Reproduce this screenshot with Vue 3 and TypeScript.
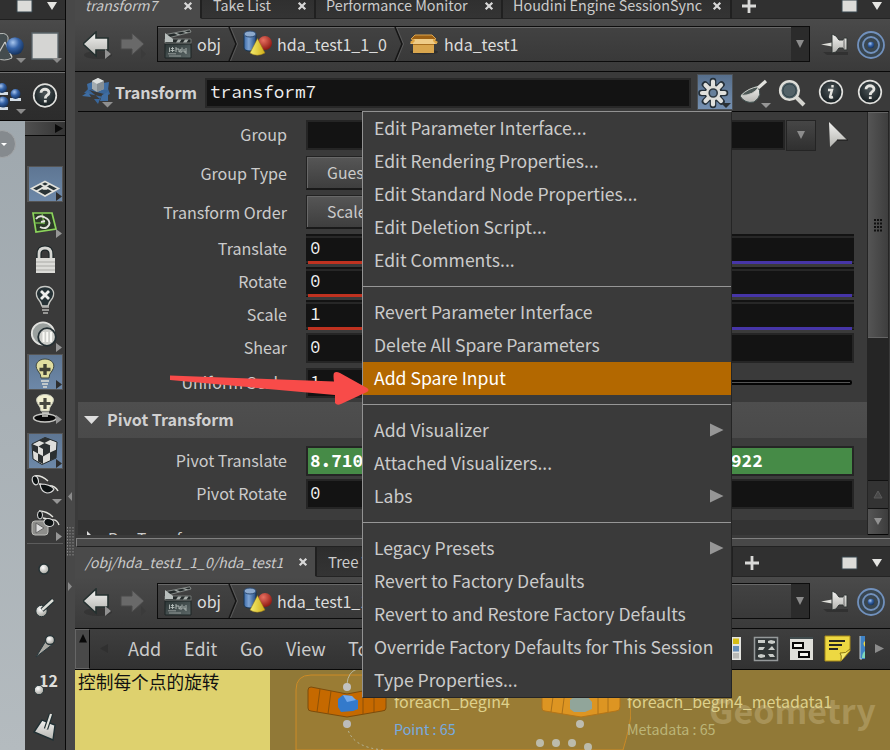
<script setup lang="ts">
interface MenuItem {
  label: string
  sub?: boolean
  active?: boolean
}

interface ParamRow {
  label: string
  value: string
  expr?: boolean
  end?: string
  axis?: boolean
}

const menuGroups: MenuItem[][] = [
  [
    { label: 'Edit Parameter Interface...' },
    { label: 'Edit Rendering Properties...' },
    { label: 'Edit Standard Node Properties...' },
    { label: 'Edit Deletion Script...' },
    { label: 'Edit Comments...' },
  ],
  [
    { label: 'Revert Parameter Interface' },
    { label: 'Delete All Spare Parameters' },
    { label: 'Add Spare Input', active: true },
  ],
  [
    { label: 'Add Visualizer', sub: true },
    { label: 'Attached Visualizers...' },
    { label: 'Labs', sub: true },
  ],
  [
    { label: 'Legacy Presets', sub: true },
    { label: 'Revert to Factory Defaults' },
    { label: 'Revert to and Restore Factory Defaults' },
    { label: 'Override Factory Defaults for This Session' },
    { label: 'Type Properties...' },
  ],
]

const vectorRows: ParamRow[] = [
  { label: 'Translate', value: '0', axis: true },
  { label: 'Rotate', value: '0', axis: true },
  { label: 'Scale', value: '1', axis: true },
  { label: 'Shear', value: '0' },
]

const pivotRows: ParamRow[] = [
  { label: 'Pivot Translate', value: '8.710', expr: true, end: '922' },
  { label: 'Pivot Rotate', value: '0' },
]

const networkMenus: string[] = ['Add', 'Edit', 'Go', 'View', 'Tools']
</script>

<template>
  <div class="app">
    <svg class="defs" width="0" height="0">
      <defs>
        <linearGradient id="silver" x1="0" y1="0" x2="0" y2="1">
          <stop offset="0" stop-color="#f2f2f0" /><stop offset="1" stop-color="#b4b4b0" />
        </linearGradient>
        <linearGradient id="slate" x1="0" y1="0" x2="1" y2="1">
          <stop offset="0" stop-color="#2c3636" /><stop offset="1" stop-color="#5d6868" />
        </linearGradient>
        <linearGradient id="blue" x1="0" y1="0" x2="1" y2="0">
          <stop offset="0" stop-color="#3c6aa8" /><stop offset=".4" stop-color="#7fa5d4" /><stop offset="1" stop-color="#234a80" />
        </linearGradient>
        <linearGradient id="yellow" x1="0" y1="0" x2="1" y2="0">
          <stop offset="0" stop-color="#f4ee70" /><stop offset="1" stop-color="#d0ae18" />
        </linearGradient>
        <radialGradient id="red" cx=".38" cy=".3" r=".7">
          <stop offset="0" stop-color="#e87060" /><stop offset="1" stop-color="#8f1a14" />
        </radialGradient>
        <radialGradient id="ball" cx=".38" cy=".3" r=".7">
          <stop offset="0" stop-color="#a8c6ee" /><stop offset=".5" stop-color="#3563a8" /><stop offset="1" stop-color="#163460" />
        </radialGradient>
        <radialGradient id="pearl" cx=".4" cy=".35" r=".7">
          <stop offset="0" stop-color="#fff" /><stop offset="1" stop-color="#9d9d96" />
        </radialGradient>
        <radialGradient id="glass" cx=".5" cy=".4" r=".6">
          <stop offset="0" stop-color="#4c5558" /><stop offset="1" stop-color="#151d20" />
        </radialGradient>
      </defs>
      <symbol id="nav" viewBox="0 0 66 34">
        <ellipse cx="15" cy="24" rx="14" ry="4" fill="#222" opacity=".35" />
        <path d="M0 13 13 1V7H25V19H13V25Z" fill="url(#silver)" stroke="#24302f" stroke-width="1.6" />
        <path d="M61 13 49 2V8H38V18H49V24Z" fill="#696969" stroke="#4b4b4b" />
        <path d="M22 18 28 23 22 28Z" fill="#929292" />
        <path d="M58 18 63 23 58 28Z" fill="#3b3b3b" />
      </symbol>
      <symbol id="clapper" viewBox="0 0 28 30">
        <path d="M1 15H27V29H1Z" fill="url(#slate)" stroke="#1c2525" />
        <path d="M1 10H27V14H1Z" fill="#242a2a" stroke="#8a908d" stroke-width=".7" />
        <path d="M2 5.500 26 .8 27 3 4 9Z" fill="#242a2a" stroke="#a5aaa7" stroke-width=".7" />
        <path d="M1 4 5 7 9 10 9 13H1Z" fill="#b9bfbd" />
        <path d="M10 4.500l4 1.500 2.500-.6-4-1.500ZM18 2.800l4 1.200 2.500-.6-4-1.200ZM14 10.500h3.500l-2 3h-3.500ZM21 10.500h3.500l-2 3h-3.500Z" fill="#aab0ad" />
        <path d="M5.500 18.500v4.500M7 19.500h3M8.500 18v5M6.500 21.500h4M12 18v5M12 20h3v3M17 20l-1.500 3h2.500v-4.500M20 20v3h2M22 19v6" fill="none" stroke="#b6bdba" stroke-width=".9" />
        <path d="M4 24.800H12M5 27H17" fill="none" stroke="#a4aba8" stroke-width=".8" />
      </symbol>
      <symbol id="shapes" viewBox="0 0 30 28">
        <path d="M1 4V18C1 22 13 22 13 18V4Z" fill="url(#blue)" stroke="#183450" />
        <ellipse cx="7" cy="4" rx="6" ry="3" fill="#8ca9cd" stroke="#2d4a70" />
        <circle cx="22" cy="13" r="7" fill="url(#red)" />
        <path d="M14.5 8.500 7 23Q14 27.500 22 23Z" fill="url(#yellow)" stroke="#927319" stroke-width=".5" />
      </symbol>
      <symbol id="crate" viewBox="0 0 30 21">
        <ellipse cx="15" cy="18" rx="14" ry="2.5" fill="#252525" opacity=".6" />
        <path d="M4 8H25V19H4Z" fill="#d9a64e" /><path d="M4 8H25V11H4Z" fill="#a86f20" />
        <path d="M6 1H23L27 5 24 6H6L2 5Z" fill="#9b6014" stroke="#dda44b" />
        <path d="M5 5H25L28 10H1Z" fill="#efcc88" /><path d="M5 5 1 8 3 10 6 7M24 5 29 8 27 10 24 7" fill="#e0a644" />
      </symbol>
      <symbol id="pin" viewBox="0 0 28 24">
        <path d="M2 19H27V22H6Z" fill="#282828" opacity=".6" />
        <path d="M0 11.500 11 9.500V13.500Z" fill="#deded9" />
        <path d="M11 1 15 3 18 7H22L23 5H26V17H23L22 15H18L15 19 11 20Z" fill="url(#silver)" stroke="#303635" />
        <path d="M23 6V16" stroke="#666" />
      </symbol>
      <symbol id="target" viewBox="0 0 30 30">
        <g fill="none" stroke="#7191bd"><circle cx="15" cy="15" r="13" stroke-width="1.8" fill="#394650" /><circle cx="15" cy="15" r="8" stroke-width="1.8" /></g>
        <circle cx="15" cy="15" r="3.3" fill="url(#ball)" />
      </symbol>
      <symbol id="winctl" viewBox="0 0 42 16">
        <path d="M1 2H16V14H1Z" fill="#dcdcd9" stroke="#36454c" /><path d="M31 4H41L36 12Z" fill="#e5e5e2" />
      </symbol>
      <symbol id="x" viewBox="0 0 10 10"><path d="M1.7 1.7 8.3 8.3M8.3 1.7 1.7 8.3" stroke="#d8d8d8" stroke-width="2.2" /></symbol>
      <symbol id="plus" viewBox="0 0 16 16"><path d="M8 1V15M1 8H15" stroke="#d9d9d7" stroke-width="2.8" /></symbol>
      <symbol id="help" viewBox="0 0 26 26">
        <circle cx="13" cy="13" r="11.3" fill="url(#glass)" stroke="#e0e0dd" stroke-width="1.7" />
        <path d="M9 10.2C9 5.5 17 5.8 17 10C17 13 13.3 12.5 13.3 16M13.3 17.6V20" fill="none" stroke="#e4e4e0" stroke-width="2.8" />
      </symbol>
    </svg>

    <aside class="left">
      <div class="left-tabs"><svg width="42" height="16"><use href="#winctl" /></svg></div>
      <div class="left-path">
        <svg width="65" height="51">
          <path d="M-5 15Q6 11 8 17V28L12 38Q4 42-3 38" fill="#444c4e" stroke="#b9bcb9" />
          <path d="M5 22 12 37M5 22-3 36" stroke="#c8c8c4" stroke-width="1.2" />
          <circle cx="15" cy="26" r="8.7" fill="url(#ball)" />
          <path d="M16 38H26L21 43Z" fill="#8b8b8b" />
          <path d="M32 13H58V39H32Z" fill="#d5d5d3" stroke="#59646a" stroke-width="1.3" /><path d="M52 38H62L57 43Z" fill="#8b8b8b" />
        </svg>
      </div>
      <div class="left-tools">
        <svg width="65" height="47">
          <g fill="#d4dde5"><path d="M-2 18H8V21H-2ZM10 24H21V27H10ZM-2 33H8V36H-2Z" /></g>
          <circle cx="2" cy="14" r="5" fill="url(#ball)" /><circle cx="15.500" cy="20" r="5" fill="url(#ball)" /><circle cx="3" cy="28" r="5.500" fill="url(#ball)" />
          <path d="M16 35H26L21 40Z" fill="#8b8b8b" /><use href="#help" x="32" y="8.500" width="26" height="26" />
        </svg>
      </div>
      <div class="left-body">
        <div class="viewport"><span class="knob"></span></div>
        <div class="tools">
          <div class="tool-top"><svg width="8" height="10"><path d="M0 0 8 4.500 0 9Z" fill="#0a0a0a" /></svg></div>
          <div></div>
          <svg class="on" viewBox="0 0 40 36"><path d="M20 15.500 33.500 22.500 20 30 6.500 22.500Z" fill="#2a3437" stroke="#e2e2dc" stroke-width="1.600" /><path d="M15.500 18 29 25.500M24.500 18 11 25.500" stroke="#e4e4df" stroke-width="1.700" /><ellipse cx="20" cy="22" rx="3.500" ry="1.800" fill="#e4e4df" /><path d="M31 26 37 30.500 31 35Z" fill="#2d2d2d" /></svg>
          <svg viewBox="0 0 40 38"><path d="M8 11H27L31 27 11 30Z" fill="#2b3a27" stroke="#8bd45b" stroke-width="1.700" /><path d="M10 21H20M17 11 19 22" stroke="#6eac4a" stroke-width="1.400" /><path d="M11 17Q14 13 19 15 26 18 24 23 21 28 15 25M16 20l4-1" fill="none" stroke="#e4e4df" stroke-width="1.900" /><path d="M31 27 37 31.500 31 36Z" fill="#969696" /></svg>
          <svg viewBox="0 0 40 39"><path d="M14 19V14Q14 8 20 8T26 14V19" fill="none" stroke="#192426" stroke-width="5" /><path d="M14 19V14Q14 8 20 8T26 14V19" fill="none" stroke="#d6d6d2" stroke-width="2.800" /><path d="M11 18H30V33H11Z" fill="#dcdcd8" /><path d="M11 22H30M11 26H30M11 30H30" stroke="#aaaaa5" stroke-width="1.200" /></svg>
          <svg viewBox="0 0 40 38"><path d="M17 27Q16 23 12.500 19C9 12 14 7.500 20 7.500S31 12 27.500 19Q24 23 23 27Z" fill="#263236" stroke="#c8c9c5" stroke-width="1.300" /><path d="M16 12 24 20M24 12 16 20" stroke="#eee" stroke-width="2.800" /><path d="M17 28H24M17 31H24M18 34H23" stroke="#b7b7b4" stroke-width="1.500" /></svg>
          <svg viewBox="0 0 40 37"><circle cx="18" cy="16.500" r="11.200" fill="#9aa09e" stroke="#e1e1de" stroke-width="1.800" /><circle cx="22" cy="20" r="8.800" fill="#cecfcb" stroke="#253034" stroke-width="1.800" /><path d="M18.500 15V25M22.200 15V25M26 15V25" stroke="#f9f9f5" stroke-width="2" /><path d="M31 26 37 30.500 31 35Z" fill="#969696" /></svg>
          <svg class="on" viewBox="0 0 40 36"><path d="M16 24Q16 20 13 17C8 10 14 5 20 5S32 10 27 17Q24 20 24 24Z" fill="#e0dda0" stroke="#3c4541" /><path d="M20 10V21M14.500 15.500H25.500" stroke="#3f3f35" stroke-width="3.400" /><path d="M16 27H24M17 30H23M18 33H22" stroke="#deded8" stroke-width="1.700" /><path d="M31 26 37 30.500 31 35Z" fill="#2d2d2d" /></svg>
          <svg viewBox="0 0 40 43"><ellipse cx="20" cy="28" rx="11.500" ry="4" fill="#0a0a0a" stroke="#c9c9c5" stroke-width="1.400" /><path d="M16 21Q16 18 13 14C9 8 14 4.500 20 4.500S31 8 27 14Q24 18 24 21Z" fill="#f1efd0" stroke="#c7c9b9" /><path d="M20 8V19M14.500 13.500H25.500" stroke="#484840" stroke-width="3.200" /><path d="M17 23H24M17 26H23" stroke="#d5d5ce" stroke-width="1.600" /><path d="M31 25 37 29.500 31 34Z" fill="#969696" /></svg>
          <svg class="on" viewBox="0 0 40 36"><path d="M20 4.500 32 9 31 25 17 31.500 8 26 7 11Z" fill="#dededb" stroke="#202729" /><path d="M13.500 7.500 20 4.500 26 6.500 19.500 10ZM13.500 13.500 19.500 10 25.500 12.500 18 16ZM7 11 13 13.500V20.500L7.500 17.500ZM13 20.500 18 23V31L13 28.500ZM18 16 25 12.500V19.500L18 23.500ZM25 19.500 31.500 16.500 31 25 25 27.500Z" fill="#2b3032" /><path d="M31 26 37 30.500 31 35Z" fill="#2d2d2d" /></svg>
          <svg viewBox="0 0 40 38"><path d="M10 7Q16 6 23 12M14 15 22 17Q30 16 33 22" fill="none" stroke="#e5e5df" stroke-width="1.500" /><ellipse cx="10.500" cy="11.500" rx="3" ry="4.500" fill="#0d1213" stroke="#ddd" stroke-width="1.200" transform="rotate(-15 10 12)" /><path d="M15 15Q25 15 29 20 27 24 22 24 16 23 15 15Z" fill="#0d1213" stroke="#ddd" stroke-width="1.200" /><path d="M27 30H37L32 35Z" fill="#969696" /></svg>
          <svg viewBox="0 0 40 36"><path d="M10 14H20Q23 14 23 17V25Q23 28 20 28H10Q7 28 7 25V17Q7 14 10 14Z" fill="#8e8e8b" stroke="#bdbdb9" /><path d="M11 16 19 21 11 26Z" fill="#ddd" stroke="#666" /><path d="M14 4Q22 4 28 10M18 11 27 13Q32 12 34 18" fill="none" stroke="#e5e5df" stroke-width="1.400" /><ellipse cx="15" cy="8" rx="2.500" ry="4" fill="#0d1213" stroke="#ddd" /><ellipse cx="24" cy="15.500" rx="5" ry="3.800" fill="#0d1213" stroke="#ddd" transform="rotate(15 24 15)" /><path d="M31 25 37 29.500 31 34Z" fill="#969696" /></svg>
          <div class="tool-rule"></div>
          <svg viewBox="0 0 40 50"><circle cx="19" cy="25" r="5" fill="url(#pearl)" stroke="#263336" stroke-width="1.500" /></svg>
          <svg viewBox="0 0 40 39"><circle cx="16.500" cy="17" r="5.700" fill="url(#pearl)" stroke="#263336" /><path d="M17 16 28 6" stroke="#213033" stroke-width="4.500" /><path d="M17 16 28 6" stroke="#dedfd9" stroke-width="2.400" /></svg>
          <svg viewBox="0 0 40 39"><path d="M22 6 28 11 11 24Z" fill="#aaa9a3" stroke="#28383d" /><circle cx="25" cy="7" r="4.500" fill="url(#pearl)" stroke="#263336" stroke-width="1.300" /></svg>
          <svg viewBox="0 0 40 39"><text x="14" y="15" class="twelve">12</text><circle cx="14" cy="18" r="4.700" fill="url(#pearl)" stroke="#263336" /></svg>
          <svg viewBox="0 0 40 39"><path d="M9 21 17 9 30 14 28 29Z" fill="url(#silver)" stroke="#203034" stroke-width="1.400" /><path d="M21 18 26 3" stroke="#203034" stroke-width="4.500" /><path d="M21 18 26 3" stroke="#e2e2dd" stroke-width="2.200" /></svg>
        </div>
      </div>
    </aside>

    <div class="divider">
      <svg width="9" height="750"><path d="M6 492V501L2 496.500ZM2 582 6 586.500 2 591Z" fill="#8b8b8b" /><path d="M4 527V556M7 527V556M1.500 527V556" stroke="#8a8a8a" stroke-dasharray="1.500 1.500" /></svg>
    </div>

    <main class="right">
      <section class="params-pane">
        <nav class="tabs top-tabs">
          <div class="tab current t-transform"><i>transform7</i><svg width="10" height="10"><use href="#x" /></svg></div>
          <div class="tab t-take"><span>Take List</span><svg width="10" height="10"><use href="#x" /></svg></div>
          <div class="tab t-perf"><span>Performance Monitor</span><svg width="10" height="10"><use href="#x" /></svg></div>
          <div class="tab t-engine"><span>Houdini Engine SessionSync</span><svg width="10" height="10"><use href="#x" /></svg></div>
          <div class="tab-end"><svg width="16" height="16"><use href="#plus" /></svg><svg width="42" height="16"><use href="#winctl" /></svg></div>
        </nav>
        <div class="pathbar">
          <svg class="nav" width="66" height="34"><use href="#nav" /></svg>
          <div class="crumbs">
            <svg width="28" height="30"><use href="#clapper" /></svg><span class="c-obj">obj</span>
            <svg class="chev" width="10" height="34"><path d="M1 0 8 17 1 34" fill="none" stroke="#151515" stroke-width="1.500" /><path d="M2.500 0 9.500 17 2.500 34" fill="none" stroke="#666" stroke-width=".7" /></svg>
            <svg width="30" height="28"><use href="#shapes" /></svg><span class="c-hda">hda_test1_1_0</span>
            <svg class="chev" width="10" height="34"><path d="M1 0 8 17 1 34" fill="none" stroke="#151515" stroke-width="1.500" /><path d="M2.500 0 9.500 17 2.500 34" fill="none" stroke="#666" stroke-width=".7" /></svg>
            <svg width="30" height="21"><use href="#crate" /></svg><span class="c-last">hda_test1</span>
            <div class="drop"><svg width="10" height="8"><path d="M1 0H9L5 8Z" fill="#8c8c8c" /></svg></div>
          </div>
          <svg class="pin" width="28" height="24"><use href="#pin" /></svg>
          <svg width="30" height="30"><use href="#target" /></svg>
        </div>
        <header class="node-head">
          <svg width="32" height="32">
            <path d="M2 17 8 11 10 14 23 14 25 10 28 18 22 21ZM7 14 18 23 22 18M12 23H18L16 28Z" fill="#39669a" />
            <path d="M0 20 6 16 9 21ZM20 19 26 16 26 25 18 25ZM5 8 10 6 12 13 6 14ZM21 7 27 6 26 14 20 14Z" fill="#3f6da2" />
            <path d="M10 5 16 2 22 5V13L15 16 10 13Z" fill="#a5adb1" /><path d="M10 5 16 2 22 5 15 8Z" fill="#dde0df" /><path d="M15 8 22 5V13L15 16Z" fill="#858e94" />
            <path d="M20 26H31L25.500 31.500Z" fill="#909090" />
          </svg>
          <b>Transform</b>
          <div class="name-input">transform7</div>
          <div class="gear">
            <svg width="34" height="34" viewBox="0 0 34 34">
              <g stroke="#253039" stroke-width="6.600" stroke-linecap="round"><path d="M15 6V30M3.500 18H27M7 9.500 23.500 26.500M23.500 9.500 7 26.500" /></g>
              <circle cx="15.500" cy="18" r="9" fill="#253039" />
              <g stroke="#e1e1dd" stroke-width="4.200" stroke-linecap="round"><path d="M15 6.500V29.500M4 18H26.500M7.500 10 23 26M23 10 7.500 26" /></g>
              <circle cx="15.200" cy="18" r="7.300" fill="#deded9" /><circle cx="15.200" cy="18" r="4" fill="#68819b" stroke="#303b43" stroke-width="1.600" />
              <path d="M23 28H33L28 33Z" fill="#2b3033" />
            </svg>
          </div>
          <svg class="ladle" width="32" height="32"><path d="M1 19Q4 15 18 9 25 18 15 25 6 27 1 19Z" fill="url(#silver)" stroke="#40504f" /><path d="M2 18.500Q9 11 20 9.500 15 18.500 2 18.500Z" fill="#4c5856" stroke="#c8c9c4" /><path d="M19 11 27 4" stroke="#e2e2de" stroke-width="3.200" /><path d="M22 26H32L27 31Z" fill="#969696" /></svg>
          <svg class="lens" width="28" height="28"><path d="M17 17 26 26" stroke="#d4d4cf" stroke-width="4" /><circle cx="11.500" cy="11.500" r="9.300" fill="#526167" stroke="#deded9" stroke-width="2.600" /><circle cx="11.500" cy="11.500" r="6.500" fill="none" stroke="#31454c" /></svg>
          <svg class="info" width="26" height="26"><circle cx="13" cy="13" r="11.300" fill="url(#glass)" stroke="#e0e0dd" stroke-width="1.700" /><path d="M10 11H14L12 18Q12 19 15 18M14.500 6V8.500" fill="none" stroke="#e5e5e0" stroke-width="2.400" /></svg>
          <svg width="26" height="26"><use href="#help" /></svg>
        </header>
        <div class="params">
          <div class="param-list">
            <div class="row r-group"><label>Group</label><div class="field group-field"></div><div class="btn-drop"><svg width="10" height="8"><path d="M1 0H9L5 8Z" fill="#8c8c8c" /></svg></div><svg class="cursor" width="22" height="28"><path d="M2 1 20 19 10 19 3 26Z" fill="url(#silver)" /><path d="M10 19H21" stroke="#151515" /></svg></div>
            <div class="row r-menu"><label>Group Type</label><div class="combo">Guess</div></div>
            <div class="row r-menu"><label>Transform Order</label><div class="combo">Scale</div></div>
            <div v-for="r in vectorRows" :key="r.label" class="row"><label>{{ r.label }}</label><div class="field" :class="{ axis: r.axis }">{{ r.value }}</div></div>
            <div class="row r-uniform"><label>Uniform Scale</label><div class="field small">1</div><div class="slider"></div></div>
            <div class="fold"><svg width="16" height="9"><path d="M0 0H15L7.500 8Z" fill="#dedede" /></svg><b>Pivot Transform</b></div>
            <div class="fold-body">
              <div v-for="r in pivotRows" :key="r.label" class="row"><label>{{ r.label }}</label><div class="field" :class="{ expr: r.expr }"><span>{{ r.value }}</span><span class="end">{{ r.end }}</span></div></div>
            </div>
            <div class="fold closed"><svg width="9" height="15"><path d="M0 0 7 7 0 14Z" fill="#dedede" /></svg><span>Pre-Transform</span></div>
          </div>
          <div class="scroll">
            <div class="thumb"><svg width="10" height="13"><path d="M2 0V13M5 0V13M8 0V13" stroke="#101010" stroke-width="2" stroke-dasharray="2 1.500" /></svg></div>
            <div class="track"></div>
            <div class="sbtn"><svg width="10" height="9"><path d="M1 8H9L5 1Z" fill="#494949" stroke="#5b5b5b" /></svg></div>
            <div class="sbtn lit"><svg width="10" height="9"><path d="M1 1H9L5 8Z" fill="#929292" /></svg></div>
          </div>
        </div>
      </section>

      <div class="splitter"></div>

      <section class="network-pane">
        <nav class="tabs">
          <div class="tab current t-net"><i>/obj/hda_test1_1_0/hda_test1</i><svg width="10" height="10"><use href="#x" /></svg></div>
          <div class="tab t-tree"><span>Tree View</span></div>
          <div class="tab-end"><svg width="16" height="16"><use href="#plus" /></svg><svg width="42" height="16"><use href="#winctl" /></svg></div>
        </nav>
        <div class="pathbar">
          <svg class="nav" width="66" height="34"><use href="#nav" /></svg>
          <div class="crumbs">
            <svg width="28" height="30"><use href="#clapper" /></svg><span class="c-obj">obj</span>
            <svg class="chev" width="10" height="34"><path d="M1 0 8 17 1 34" fill="none" stroke="#151515" stroke-width="1.500" /><path d="M2.500 0 9.500 17 2.500 34" fill="none" stroke="#666" stroke-width=".7" /></svg>
            <svg width="30" height="28"><use href="#shapes" /></svg><span class="c-hda">hda_test1_1_0</span>
            <div class="drop"><svg width="10" height="8"><path d="M1 0H9L5 8Z" fill="#8c8c8c" /></svg></div>
          </div>
          <svg class="pin" width="28" height="24"><use href="#pin" /></svg>
          <svg width="30" height="30"><use href="#target" /></svg>
        </div>
        <div class="menubar">
          <div class="stow"><svg width="8" height="9"><path d="M0 8.500 4 0 8 8.500Z" fill="#080808" /></svg></div>
          <svg class="back" width="8" height="10"><path d="M8 0V9L0 4.500Z" fill="#303030" /></svg>
          <span v-for="m in networkMenus" :key="m" :class="'m-' + m.toLowerCase()">{{ m }}</span>
          <svg class="net-icons" width="160" height="40">
            <path d="M0 8H11V31H0Z" fill="#e4e4e0" /><path d="M3 9.500H9V15H3Z" fill="#d5bd16" /><path d="M3 17H9V22.500H3Z" fill="#668eb9" /><path d="M3 24H9V29.500H3Z" fill="#b9b9b5" />
            <path d="M24.500 8.500H47.500V31.500H24.500Z" fill="#303536" stroke="#95999a" stroke-width="1.500" />
            <path d="M28 11H35V14H28ZM38 12 41 11 45 12V14L42 15 38 14ZM29 18H35L33 21H28ZM38 21 42 17 45 21ZM28 26 31 25 35 26V28L31 29 28 28ZM38 25H43L45 28H40Z" fill="#c8cbc8" />
            <path d="M60 9H83V31H60Z" fill="#deded9" /><path d="M60 9H83" stroke="#404b4d" stroke-width="2" /><path d="M63 14H73V19H63ZM69 23H79V28H69Z" fill="#f5f5f0" stroke="#080808" stroke-width="2" />
            <path d="M95 7H120V22L111 32H95Z" fill="#edd842" stroke="#a78918" /><path d="M111 32Q112 26 110 24 116 25 120 20" fill="#f5e96e" stroke="#8c7715" /><path d="M99 12H115M99 16H112M99 20H108" stroke="#292922" stroke-width="2" />
            <path d="M130 7H135V30H130Z" fill="#3f83c6" /><path d="M130 7V30H132" stroke="#c0c9ce" fill="none" /><path d="M135 12Q132 14 135 18Z" fill="#f2da43" /><path d="M132 29Q132 24 135 22V29Z" fill="#7ed8b9" />
            <path d="M145 15 154 19.500 145 24Z" fill="#8c8c8c" />
          </svg>
        </div>
        <svg class="canvas" width="815" height="80">
          <rect width="815" height="80" fill="#917937" />
          <path d="M221 80V20Q221 5 236 5H556V80Z" fill="#9a7c34" stroke="#cc8b26" />
          <path d="M556 28V45Q554 60 548 80H556Z" fill="#917937" />
          <path d="M556 28V45Q554 60 548 80" fill="none" stroke="#cc8b26" />
          <path d="M557 5V80" stroke="#917937" stroke-width="2" />
          <rect width="195" height="80" fill="#ded16e" />
          <text x="3" y="19" class="note">控制每个点的旋转</text>
          <path d="M272 14Q273 2 282-1" fill="none" stroke="#b9b79e" /><path d="M272 56Q276 78 310 80" fill="none" stroke="#b8b9a0" stroke-dasharray="2 3" />
          <path d="M236 17 272 24 309 17Q311 17 311 20V38Q311 41 307 41L272 47 236 41Q233 41 233 38V20Q233 17 236 17Z" fill="#c56900" stroke="#7d4c0b" />
          <path d="M245 19 242 42M256 21 253 44M288 21V44M299 19V42" stroke="#8c5107" />
          <path d="M263 29 268 25 277 26 278 29 283 30V39L278 41 266 42 263 37Z" fill="#347acb" /><path d="M268 25 277 26 281 30 272 32Z" fill="#75aaeb" />
          <circle cx="272" cy="17" r="4" fill="#c2c2c1" /><circle cx="272" cy="54" r="4" fill="#bcbcbb" />
          <path d="M470 17 506 24 543 17Q545 17 545 20V37Q545 41 541 41L506 47 470 41Q467 41 467 38V20Q467 17 470 17Z" fill="#dd9522" stroke="#b47518" />
          <path d="M479 19 476 42M490 21 487 44M523 21V44M533 19V42" stroke="#aa7018" />
          <path d="M495 30 500 26H512L517 32V39L510 42H499L495 39Z" fill="#91a59a" /><circle cx="505" cy="54" r="4" fill="#bdbcb0" />
          <g fill="#bcbbab"><circle cx="465" cy="73" r="4" /><circle cx="481" cy="73" r="4" /><circle cx="497" cy="73" r="4" /><circle cx="513" cy="77" r="4" /></g>
          <text x="634" y="54" class="watermark">Geometry</text>
          <text x="319" y="38" class="nname">foreach_begin4</text><text x="319" y="65" class="point">Point : 65</text>
          <text x="552" y="38" class="nname">foreach_begin4_metadata1</text><text x="552" y="65" class="meta">Metadata : 65</text>
        </svg>
      </section>
    </main>

    <div class="popup">
      <div v-for="(g, i) in menuGroups" :key="i" class="group">
        <div v-for="m in g" :key="m.label" class="item" :class="{ active: m.active }">
          <span>{{ m.label }}</span><svg v-if="m.sub" width="14" height="14"><path d="M0 .5 13.500 7 0 13.500Z" fill="#969696" /></svg>
        </div>
      </div>
    </div>

    <svg class="pointer" width="204" height="40"><path d="M3 7.500 167 13.500Q166 7 167 5Q169 3 173 5L200 20Q203 22 200 24L174 36Q170 38 168 35V27L3 12Z" fill="#f84b49" /></svg>
  </div>
</template>

<style>
body {
  margin: 0;
  overflow: hidden;
}
</style>

<style scoped>
.app {
  position: relative;
  display: flex;
  width: 890px;
  height: 750px;
  overflow: hidden;
  background: #3a3a3a;
  color: #cbcbcb;
  font: 16px/24px 'Noto Sans CJK SC', sans-serif;
  white-space: nowrap;
}
.app * { box-sizing: border-box; }
svg { flex: none; display: block; }
.defs { position: absolute; }
.left { width: 65px; display: flex; flex-direction: column; }
.left-tabs { height: 20px; padding-left: 16px; background: #303030; border-bottom: 1px solid #202020; overflow: hidden; }
.left-tabs svg { margin-top: -2px; }
.left-path { height: 52px; background: linear-gradient(#4a4a4a, #3a3a3a); border-bottom: 1px solid #080808; }
.left-tools { height: 49px; padding-top: 1px; border-top: 1px solid #707070; border-bottom: 1px solid #080808; background: linear-gradient(#333, #2c2c2c); overflow: hidden; }
.left-body { flex: 1; display: flex; min-height: 0; }
.viewport { width: 25px; background: linear-gradient(#9fa8ae, #b4bbbf); overflow: hidden; }
.knob { display: flex; width: 28px; height: 28px; margin: 9px 0 0 -12px; border: 1.500px solid #a2a5a7; border-radius: 50%; background: #858a8e; }
.knob::after { content: ''; margin: 12px 0 0 12px; width: 0; height: 0; border: 3px solid transparent; border-top-color: #fff; }
.tools { width: 40px; display: grid; align-content: start; background: #3a3a3a; grid-template-rows: 15px 30px 36px 38px 39px 38px 37px 36px 43px 36px 38px 36px 1px 50px 39px 39px 39px 39px; }
.tools > svg { width: 40px; height: 100%; }
.tools > .on { background: linear-gradient(#5e7693, #6d88a8) 4px 1px / 33px 34px no-repeat, linear-gradient(#555, #555) 2px 0 / 36px 36px no-repeat; }
.tool-top { display: flex; justify-content: flex-end; align-items: center; padding-right: 2px; border-top: 1px solid #666; border-bottom: 1px solid #090909; background: linear-gradient(90deg, #505050, #343434); }
.tool-rule { margin: 0 2px; background: #5c5c5c; }
.twelve { font: bold 16px 'Noto Sans CJK SC'; fill: #dededb; }
.divider { width: 10px; border-left: 1px solid #080808; background: #484848; }
.right { width: 815px; display: flex; flex-direction: column; }
.params-pane { height: 538px; display: flex; flex-direction: column; }
.tabs { height: 30px; display: flex; background: #303030; font-size: 14.350px; flex: none; }
.tabs i { font-size: 14px; }
.top-tabs { margin-top: -11px; }
.tab { display: flex; align-items: center; justify-content: space-between; border-right: 2px solid #202020; border-bottom: 1px solid #242424; background: linear-gradient(#2d2d2d, #343434); }
.tab.current { background: #4a4a4a; border-bottom-color: #4a4a4a; }
.top-tabs .tab { padding-top: 3px; }
.top-tabs .tab svg { margin-top: 1px; }
.tab { padding: 0 7px 0 10px; }
.t-transform { width: 127px; }
.t-take { width: 114px; padding-left: 11px; }
.t-perf { width: 187px; }
.t-engine { width: 229px; padding-right: 8px; }
.t-net { width: 242px; }
.t-tree { width: 416px; padding-left: 11px; font-size: 15px; }
.tab-end { flex: 1; display: flex; justify-content: space-between; align-items: center; padding: 2px 7px 0 11px; border-bottom: 1px solid #242424; }
.top-tabs .tab-end { padding: 4px 7px 0 9px; }
.pathbar { height: 53px; flex: none; display: flex; align-items: center; padding: 0 0 2px 8px; background: linear-gradient(#4a4a4a, #3a3a3a); border-bottom: 1px solid #080808; }
.nav { margin-top: 8px; }
.crumbs { width: 653px; height: 36px; margin-left: 8px; padding-left: 6px; display: flex; align-items: center; border: 1px solid #0c0c0c; box-shadow: inset 0 1px #686868; background: linear-gradient(#424242, #393939); font-size: 16px; color: #dcdcdc; overflow: hidden; }
.c-obj { width: 31px; margin-left: 5px; }
.c-hda { width: 117px; margin-left: 4px; }
.c-last { margin-left: 5px; }
.chev { margin-right: 5px; }
.drop { width: 18px; height: 34px; margin-left: auto; display: grid; place-items: center; background: #2b2b2b; }
.pin { margin: 2px 7px 0 11px; }
.pin + svg { margin-top: 2px; }
.node-head { height: 40px; flex: none; display: flex; align-items: center; margin: 0 1px 0 3px; padding-left: 4px; border-bottom: 1px solid #080808; }
.node-head > b { width: 90px; margin-left: 1px; font-size: 16.100px; color: #d2d2d2; }
.name-input { width: 486px; height: 30px; margin-top: 3px; padding: 0 3px; border: 2px solid #282828; background: #131313; color: #f0f0f0; font: 17.700px/25px 'Source Code Pro', 'Liberation Mono', monospace; }
.gear { margin: 1px 0 0 6px; width: 36px; height: 36px; background: linear-gradient(#566e8b, #7590b1); border: 1px solid #4c5156; }
.ladle { margin: 2px 0 0 6px; }
.lens { margin: 2px 0 0 7px; }
.info { margin: 0 13px 0 12px; }
.params { height: 423px; display: flex; overflow: hidden; }
.param-list { width: 792px; padding: 8px 0 0 3px; }
.row { display: flex; align-items: center; height: 30px; margin-bottom: 3px; }
.row label { width: 209px; margin-right: 19px; padding-bottom: 2px; text-align: right; flex: none; font-size: 16.100px; }
.field { width: 548px; height: 30px; padding: 0 2px; display: flex; justify-content: space-between; border: 2px solid #252525; background: #131313; color: #f0f0f0; font: 17.700px/25px 'Source Code Pro', 'Liberation Mono', monospace; }
.axis { border-bottom: 3px solid; border-image: linear-gradient(90deg, #bf3220 50%, #4635a7 50%) 0 0 3 0; background: linear-gradient(#272727 2px, #131313 2px); }
.expr { background: #468b47; color: #fff; font-weight: bold; line-height: 26px; }
.end { width: 119px; }
.group-field { width: 479px; }
.btn-drop { width: 30px; height: 31px; margin-left: 1px; display: grid; place-items: center; border: 1px solid #242424; background: linear-gradient(#464646, #303030); }
.cursor { margin-left: 11px; }
.r-group { margin-bottom: 6px; }
.r-menu { height: 34px; margin-bottom: 5px; }
.r-menu label { padding-bottom: 0; }
.combo { width: 200px; height: 34px; padding-left: 20px; line-height: 32px; border: 1px solid #222; border-bottom: 2px solid #191919; box-shadow: inset 1px 1px #686868; background: linear-gradient(#565656, #3e3e3e); font-size: 15.800px; }
.r-uniform { height: 33px; }
.small { width: 110px; }
.slider { width: 436px; height: 5px; border: 2px solid #050505; background: #555; border-radius: 2px; }
.fold { height: 36px; display: flex; align-items: center; padding-left: 6px; gap: 7px; background: linear-gradient(#4e4e4e, #4a4a4a); }
.fold b { font-size: 16.100px; color: #d0d0d0; padding-bottom: 2px; }
.fold-body { height: 82px; padding-top: 8px; background: #3c3c3c; }
.closed { background: #333; gap: 12px; font-size: 15.500px; padding-left: 9px; }
.scroll { width: 22px; display: flex; flex-direction: column; border: 0 solid #252525; border-width: 0 1px 0 1px; }
.thumb { height: 226px; display: grid; place-items: center; background: linear-gradient(90deg, #555, #3e3e3e); border: 1px solid #646464; border-width: 1px 0; }
.track { height: 142px; background: #252525; }
.sbtn { height: 28px; display: grid; place-items: center; border-top: 1px solid #111; background: #333; }
.lit { height: 27px; background: linear-gradient(90deg, #555, #3d3d3d); border-bottom: 1px solid #050505; }
.splitter { height: 9px; margin-left: 1px; border: 1px solid #808080; border-width: 1px 0 0 1px; background: #484848; border-bottom: 1px solid #222; }
.network-pane { flex: 1; display: flex; flex-direction: column; }
.network-pane .pathbar { height: 52px; padding-bottom: 3px; }
.menubar { height: 41px; display: flex; align-items: center; background: linear-gradient(#3e3e3e, #323232); border-bottom: 1px solid #080808; font-size: 18px; }
.menubar > span { padding-bottom: 2px; }
.stow { width: 15px; height: 40px; padding: 4px 0 0 3px; border: 1px solid #666; border-right: 1px solid #080808; background: #494949; }
.back { margin: 0 20px 0 10px; }
.m-add { width: 56px; }
.m-edit { width: 56px; }
.m-go { width: 46px; }
.m-view { width: 62px; }
.m-tools { width: 100px; }
.net-icons { margin-left: auto; margin-right: 0; }
.canvas { overflow: hidden; }
.note { font-size: 17.700px; fill: #111; }
.nname { font-size: 16px; fill: #ded18c; }
.point { font-size: 14.300px; fill: #76abe0; }
.meta { font-size: 14.300px; fill: #bcb578; }
.watermark { font-size: 34px; font-weight: bold; fill: #a89358; }
.popup { position: absolute; left: 362px; top: 111px; width: 370px; height: 587px; border: 1px solid #929292; border-right-color: #252525; border-bottom-color: #252525; background: #3a3a3a; font-size: 17.580px; }
.group + .group { margin-top: 9px; padding-top: 9px; border-top: 1px solid #969696; }
.item { height: 33px; display: flex; align-items: center; justify-content: space-between; padding: 0 7px 2px 11px; }
.active { background: #b36800; color: #fff; }
.pointer { position: absolute; left: 167px; top: 368px; }
</style>
